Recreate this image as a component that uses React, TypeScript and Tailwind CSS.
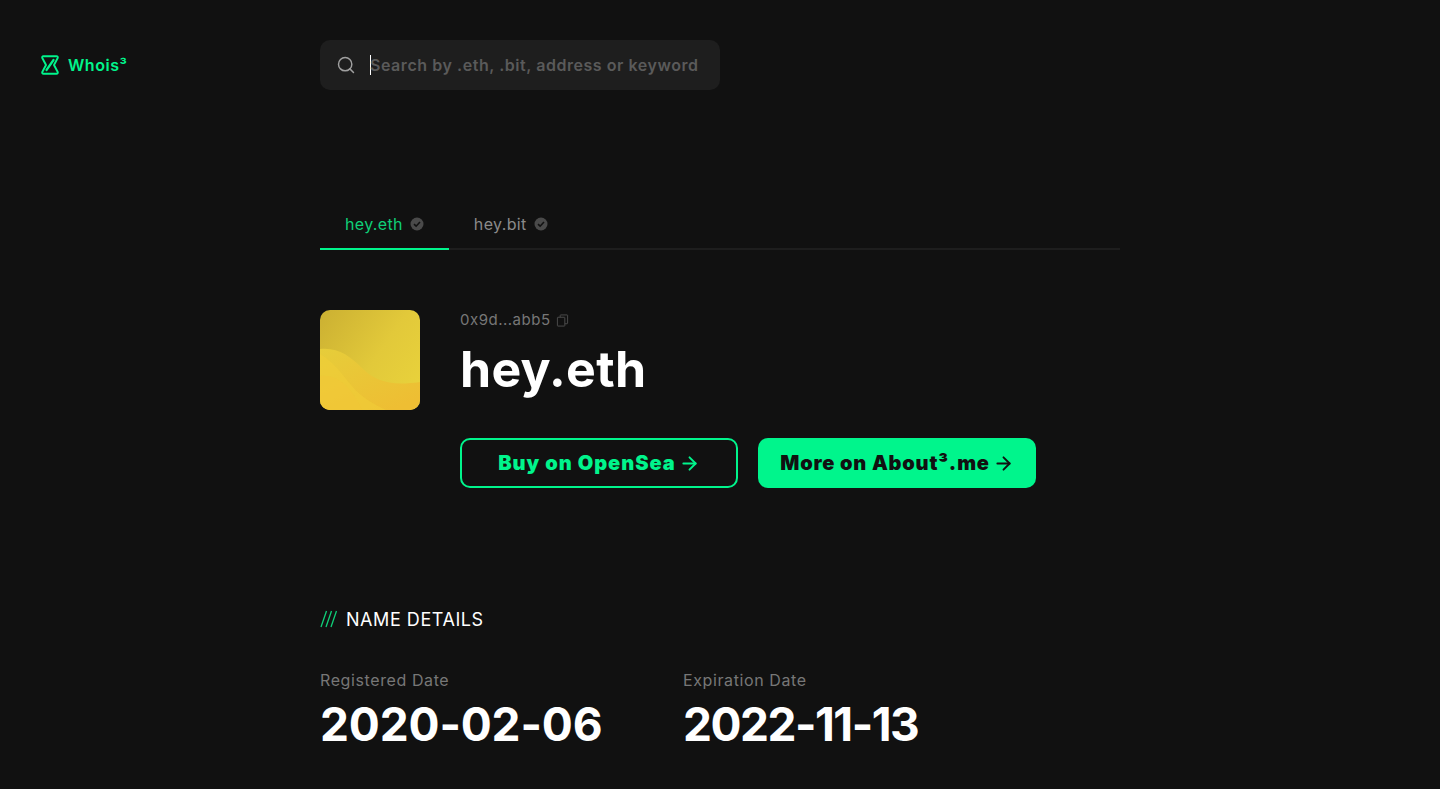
import React from 'react';
import { ArrowRight, Search } from 'lucide-react';

const font = { fontFamily: 'Inter, "Noto Sans", sans-serif' };

const Logo = () => (
  <svg width="20" height="20" viewBox="0 0 20 20" fill="none" stroke="#00f58c" strokeWidth="1.900" strokeLinejoin="round" strokeLinecap="round">
    <path d="M3.500 1.200h13c1.100 0 1.600 1 1.200 1.800L14 10l3.700 7c.4.8-.1 1.800-1.200 1.800h-13c-1.100 0-1.600-1-1.200-1.800L6 10 2.300 3c-.4-.8.100-1.800 1.100-1.800z" />
    <path d="M13.500 5 6.500 15" strokeWidth="2.200" />
  </svg>
);

const Badge = () => (
  <svg width="14" height="14" viewBox="0 0 14 14" className="shrink-0">
    <circle cx="7" cy="7" r="6.500" fill="#4a4a4a" />
    <path d="M4 7.200 6.100 9.200 10 5" fill="none" stroke="#111111" strokeWidth="1.600" />
  </svg>
);

const CopyIcon = () => (
  <svg width="13" height="13" viewBox="0 0 14 14" fill="none" stroke="#4f4f4f" strokeWidth="1">
    <rect x="1.500" y="3.500" width="8" height="9.500" rx="0.500" />
    <path d="M4.500 3.500V1.500a.5.5 0 0 1 .5-.5h7a.5.5 0 0 1 .5.500v8.500a.5.5 0 0 1-.5.5H9.500" />
  </svg>
);

const Avatar = () => (
  <div className="w-[100px] h-[100px] rounded-[10px] overflow-hidden shrink-0">
    <svg width="100" height="100" viewBox="0 0 100 100">
      <defs>
        <linearGradient id="avatarBg" x1="0" y1="0" x2="1" y2="0.700">
          <stop offset="0" stopColor="#cbb032" />
          <stop offset="0.600" stopColor="#e2c93a" />
          <stop offset="1" stopColor="#e8d13b" />
        </linearGradient>
        <linearGradient id="avatarWave" x1="0" y1="0" x2="0.700" y2="1">
          <stop offset="0" stopColor="#e6cd3a" />
          <stop offset="1" stopColor="#eebe33" />
        </linearGradient>
      </defs>
      <rect width="100" height="100" fill="url(#avatarBg)" />
      <path d="M0 39C18 37 30 46 42 58 C56 72 72 76 100 72V100H0Z" fill="url(#avatarWave)" />
      <path d="M0 44C14 52 20 62 32 76 C42 88 54 94 66 100H0Z" fill="#f2cf38" opacity="0.500" />
      <path d="M0 66C18 64 32 78 42 100H0Z" fill="#f3c536" opacity="0.400" />
    </svg>
  </div>
);

const Tab = ({ label, active }: { label: string; active?: boolean }) => (
  <div className={`flex items-center gap-[7px] h-[50px] px-[25px] -mb-0.5 border-b-2 ${active ? 'border-[#00f58c]' : 'border-transparent'}`}>
    <span className={`text-[16px] tracking-[0.35px] ${active ? 'text-[#0fcf78]' : 'text-[#8a8a8a]'}`}>{label}</span>
    <Badge />
  </div>
);

const DateItem = ({ label, value, spacing }: { label: string; value: string; spacing: string }) => (
  <div className="w-[363px]">
    <div className="text-[16px] leading-5 tracking-[0.6px] text-[#777777]">{label}</div>
    <div className={`mt-1 text-[46px] leading-[60px] font-bold text-white ${spacing}`}>{value}</div>
  </div>
);

export default function App() {
  return (
    <div className="flex h-[789px] overflow-hidden bg-[#111111]" style={font}>
      <aside className="w-80 shrink-0 pl-10 pt-[55px]">
        <div className="flex items-center gap-2 h-5">
          <Logo />
          <span className="text-[16px] font-semibold text-[#00f58c] tracking-[0.55px]">Whois³</span>
        </div>
      </aside>

      <main className="w-[800px] pt-10">
        <div className="flex items-center h-[50px] w-[400px] rounded-[10px] bg-[#1e1e1e] pl-4">
          <Search size={20} className="text-[#a0a0a0] shrink-0" strokeWidth={1.750} />
          <div className="ml-[14px] w-px h-5 bg-white" />
          <span className="-ml-px text-[16px] font-semibold text-[#5a5a5a] tracking-[0.55px]">Search by .eth, .bit, address or keyword</span>
        </div>

        <div className="flex mt-[110px] border-b-2 border-[#1e1e1e]">
          <Tab label="hey.eth" active />
          <Tab label="hey.bit" />
        </div>

        <div className="flex gap-10 mt-[60px]">
          <Avatar />
          <div>
            <div className="flex items-center gap-[5px] h-5">
              <span className="text-[15px] tracking-[0.5px] text-[#777777]">0x9d...abb5</span>
              <CopyIcon />
            </div>
            <h1 className="text-[50px] leading-[78px] font-bold text-white tracking-[0.3px]">hey.eth</h1>
            <div className="flex gap-5 mt-[30px]">
              <a className="flex items-center justify-center w-[278px] h-[50px] rounded-[10px] border-2 border-[#00f58c] text-[#00f58c] text-[20px] font-black tracking-[1px]">
                Buy on OpenSea
                <ArrowRight size={21} strokeWidth={2.200} className="ml-[3px]" />
              </a>
              <a className="flex items-center justify-center w-[278px] h-[50px] rounded-[10px] bg-[#00f58c] text-[#111111] text-[20px] font-black tracking-[0.8px]">
                More on About³.me
                <ArrowRight size={21} strokeWidth={2.200} className="ml-[3px]" />
              </a>
            </div>
          </div>
        </div>

        <div className="flex items-center mt-[121px] h-5">
          <span className="w-[26px]" aria-hidden="true">
            <svg width="17" height="18" viewBox="0 0 17 18" stroke="#0fcf78" strokeWidth="1.300" fill="none">
              <path d="M6.500 1 1 17M11.500 1 6 17M16.500 1 11 17" />
            </svg>
          </span>
          <span className="text-[18px] text-white tracking-[0.55px]">NAME DETAILS</span>
        </div>

        <div className="flex mt-[41px]">
          <DateItem label="Registered Date" value="2020-02-06" spacing="tracking-[-0.15px]" />
          <DateItem label="Expiration Date" value="2022-11-13" spacing="tracking-[-1.5px]" />
        </div>
      </main>
    </div>
  );
}
